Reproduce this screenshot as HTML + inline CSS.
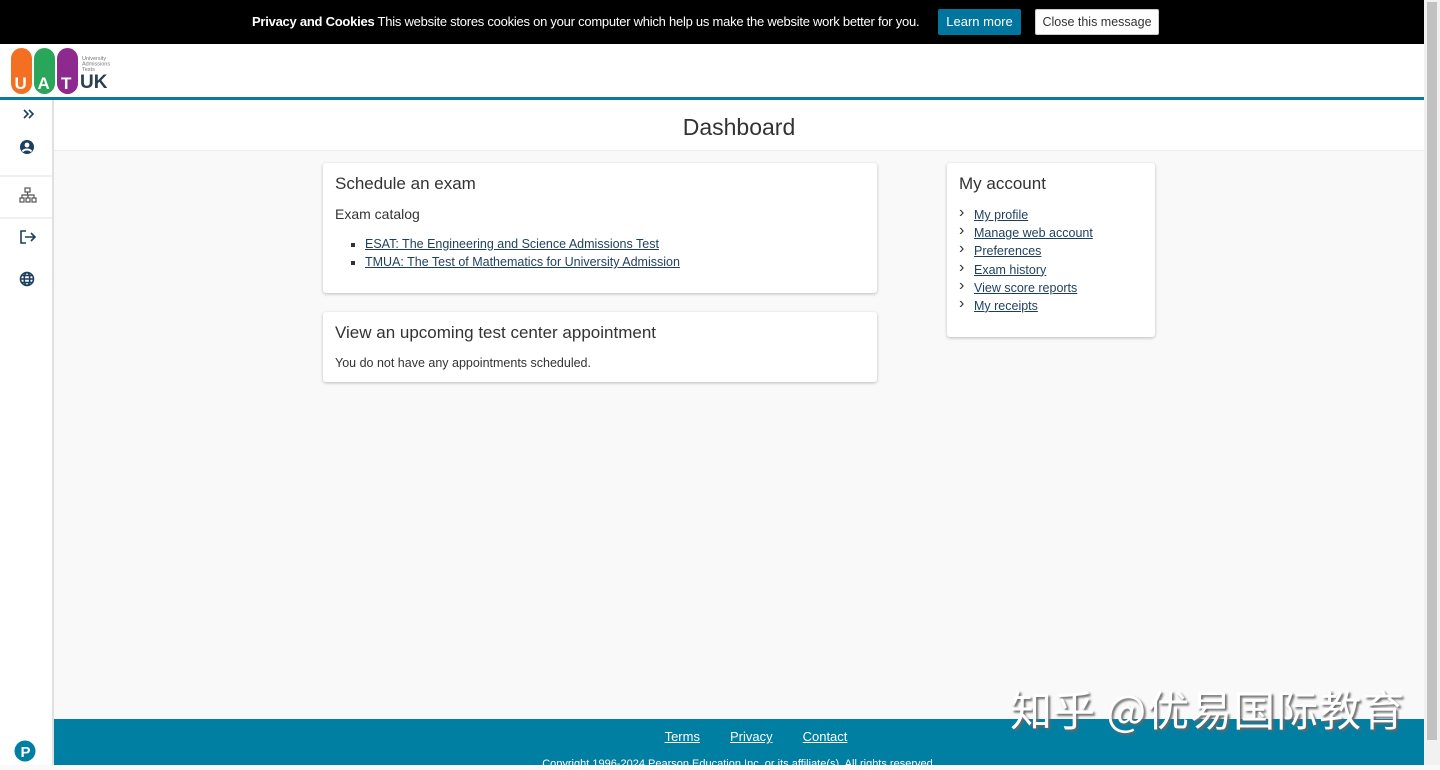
<!DOCTYPE html>
<html><head><meta charset="utf-8"><style>
*{box-sizing:border-box;margin:0;padding:0}
body{width:1440px;height:765px;overflow:hidden;font-family:"Liberation Sans","Noto Sans CJK SC",sans-serif;background:#f9f9f9;color:#333;position:relative}
.cookie{position:absolute;left:0;top:0;width:1424px;height:44px;background:#000;color:#fff;font-size:13px}
.cookie .t{position:absolute;left:252px;top:14px;letter-spacing:-0.25px;white-space:nowrap}
.btn1{position:absolute;left:938px;top:9px;width:83px;height:26px;background:#00769e;border-radius:2px;color:#fff;font-size:13px;text-align:center;line-height:26px}
.btn2{position:absolute;left:1035px;top:9px;width:124px;height:26px;background:#fff;border:1px solid #ccc;border-radius:2px;color:#333;font-size:12.5px;text-align:center;line-height:24px}
.header{position:absolute;left:0;top:44px;width:1424px;background:#fff;border-bottom:3px solid #0b7aa1;height:56px}
.side{position:absolute;left:0;top:100px;width:54px;height:665px;background:#fff;border-right:2px solid #e0e0e0}
.title{position:absolute;left:54px;top:100px;width:1370px;height:51px;background:#fff;border-bottom:1px solid #eee;text-align:center;font-size:23px;line-height:54px;color:#333}
.card{position:absolute;background:#fff;border-radius:3px;box-shadow:0 1px 3px rgba(0,0,0,.25)}
.card h2{font-weight:normal;font-size:17px;color:#333}
a{color:#1d3f5e;text-decoration:underline}
.small{font-size:12.5px}
.footer{position:absolute;left:54px;top:719px;width:1370px;height:46px;background:#007fa3;color:#fff;text-align:center}
.footer a{color:#fff;font-size:13px;margin:0 15px}
.scroll{position:absolute;left:1424px;top:0;width:16px;height:765px;background:#f1f1f1}
.scroll div{position:absolute;left:3px;top:2px;width:10px;height:738px;background:#c1c1c1}
.wm{position:absolute;left:1010px;top:678px;font-size:42px;color:#fff;text-shadow:2px 2px 2px #666;font-family:"Noto Sans CJK SC",sans-serif;letter-spacing:1px;white-space:nowrap}
.acc li{list-style:none;font-size:12.5px;height:18.2px;position:relative;padding-left:15px}
.acc li:before{content:"›";position:absolute;left:0;top:-4px;font-size:16px;color:#333}
</style></head><body>
<div class="cookie"><div class="t"><b>Privacy and Cookies</b> This website stores cookies on your computer which help us make the website work better for you.</div>
<div class="btn1">Learn more</div><div class="btn2">Close this message</div></div>
<div class="header">
<svg width="120" height="52" style="position:absolute;left:10px;top:3px">
<rect x="1" y="1" width="21" height="46" rx="10.5" fill="#f36f21"/><rect x="24" y="1" width="21" height="46" rx="10.5" fill="#2aa65b"/><rect x="47" y="1" width="21" height="46" rx="10.5" fill="#8e2a8f"/>
<text x="4.5" y="42" font-size="17" fill="#fff" font-family="Liberation Sans" font-weight="bold">U</text>
<text x="27.5" y="42" font-size="17" fill="#fff" font-family="Liberation Sans" font-weight="bold">A</text>
<text x="51" y="42" font-size="17" fill="#fff" font-family="Liberation Sans" font-weight="bold">T</text>
<text x="72" y="13" font-size="5.5" fill="#777" font-family="Liberation Sans">University</text>
<text x="72" y="18.5" font-size="5.5" fill="#777" font-family="Liberation Sans">Admissions</text>
<text x="72" y="24" font-size="5.5" fill="#777" font-family="Liberation Sans">Tests</text>
<text x="70" y="41" font-size="19" fill="#2c3e50" font-family="Liberation Sans" font-weight="bold">UK</text>
</svg></div>
<div class="side">
<svg width="54" height="200" style="position:absolute;left:0;top:0" fill="none" stroke="#1d3f5e" stroke-width="1.6">
<path d="M24 10l4 4-4 4M29 10l4 4-4 4"/>
<circle cx="27" cy="47" r="7" fill="#1d3f5e" stroke="none"/><circle cx="27" cy="45" r="2.4" fill="#fff" stroke="none"/><path d="M22.5 51.5a5 3.5 0 0 1 9 0" stroke="#fff" stroke-width="2"/>
<line x1="0" y1="76" x2="52" y2="76" stroke="#e0e0e0" stroke-width="1"/>
<g stroke="#555" stroke-width="1.2"><rect x="25" y="88" width="5" height="4"/><rect x="20" y="98" width="4" height="4"/><rect x="26" y="98" width="4" height="4"/><rect x="32" y="98" width="4" height="4"/><path d="M27.5 92v3M22 98v-3h12v3M28 95v3"/></g>
<line x1="0" y1="118" x2="52" y2="118" stroke="#e0e0e0" stroke-width="1"/>
<path d="M26 131h-5v12h5M25 137h10M31 133l4 4-4 4"/>
<circle cx="27" cy="179" r="6.5"/><ellipse cx="27" cy="179" rx="2.8" ry="6.5"/><path d="M20.5 179h13M21.5 175.5h11M21.5 182.5h11"/>
</svg>
<svg width="22" height="22" style="position:absolute;left:14px;top:640px"><circle cx="11" cy="11" r="10.5" fill="#007fa3"/><text x="6.5" y="17" font-size="15" font-weight="bold" fill="#fff" font-family="Liberation Sans">P</text></svg>
</div>
<div class="title">Dashboard</div>
<div class="card" style="left:323px;top:163px;width:554px;height:130px;padding:11px 12px">
<h2>Schedule an exam</h2>
<div style="font-size:14px;margin-top:12px">Exam catalog</div>
<ul style="margin:15px 0 0 30px;list-style:square" class="small"><li style="height:18px"><a>ESAT: The Engineering and Science Admissions Test</a></li><li><a>TMUA: The Test of Mathematics for University Admission</a></li></ul>
</div>
<div class="card" style="left:323px;top:312px;width:554px;height:70px;padding:11px 12px">
<h2>View an upcoming test center appointment</h2>
<div class="small" style="margin-top:13px">You do not have any appointments scheduled.</div>
</div>
<div class="card" style="left:947px;top:163px;width:208px;height:174px;padding:11px 12px">
<h2>My account</h2>
<ul class="acc" style="margin-top:14px"><li><a>My profile</a></li><li><a>Manage web account</a></li><li><a>Preferences</a></li><li><a>Exam history</a></li><li><a>View score reports</a></li><li><a>My receipts</a></li></ul>
</div>
<div class="footer"><div style="margin-top:9px;padding-left:34px"><a>Terms</a><a>Privacy</a><a>Contact</a></div>
<div style="font-size:11px;margin-top:12px">Copyright 1996-2024 Pearson Education Inc. or its affiliate(s). All rights reserved.</div></div>
<div class="wm">知乎 @优易国际教育</div>
<div class="scroll"><div></div></div>
</body></html>
